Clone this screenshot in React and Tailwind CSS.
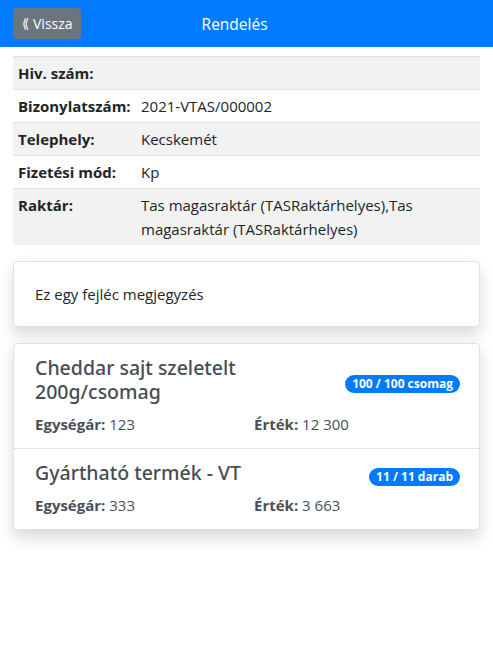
import React from "react";

const font = { fontFamily: '"Open Sans", "Noto Sans", sans-serif' };

function Row({ label, value, striped }) {
  return (
    <div className={`grid grid-cols-[123px_1fr] border-t border-[#dee2e6] ${striped ? "bg-[#f2f2f2]" : "bg-white"}`}>
      <div className="px-[5px] py-[4px] font-bold text-[#212529]">{label}</div>
      <div className="px-[5px] py-[4px] text-[#212529]">{value}</div>
    </div>
  );
}

function Item({ title, badge, price, value, last }) {
  return (
    <div className={`pl-[21px] pr-[19px] py-[12px] ${last ? "" : "border-b border-[#dee2e6]"}`}>
      <div className="flex items-center justify-between">
        <div style={{ fontFamily: '"Noto Sans", "Open Sans", sans-serif' }} className="mb-2 text-[19.5px] leading-[24px] font-medium text-[#474d53] w-[320px]">{title}</div>
        <span className="whitespace-nowrap rounded-full bg-[#007bff] px-[7px] text-[12px] leading-[18px] font-bold text-white">{badge}</span>
      </div>
      <div className="grid grid-cols-[219px_1fr] text-[#495057]">
        <div><span className="font-bold">Egységár:</span> {price}</div>
        <div><span className="font-bold">Érték:</span> {value}</div>
      </div>
    </div>
  );
}

export default function App() {
  return (
    <div style={font} className="w-[493px] min-h-[645px] bg-white text-[15px] leading-[24px]">
      <div className="h-[47px] bg-[#007bff] flex items-center px-[13px]">
        <button className="h-[31px] rounded-[4px] bg-[#6c757d] pl-[9px] pr-[8px] text-[14px] leading-[21px] text-white flex items-center">
          <span className="mr-[4px] text-[13px]">⟪</span>Vissza
        </button>
        <div className="ml-[121px] text-white text-[15.5px]">Rendelés</div>
      </div>
      <div className="px-[13px] pt-[9px]">
        <Row label="Hiv. szám:" value="" striped />
        <Row label="Bizonylatszám:" value="2021-VTAS/000002" />
        <Row label="Telephely:" value="Kecskemét" striped />
        <Row label="Fizetési mód:" value="Kp" />
        <Row label="Raktár:" value="Tas magasraktár (TASRaktárhelyes),Tas magasraktár (TASRaktárhelyes)" striped />
      </div>
      <div className="px-[13px] pt-[16px]">
        <div className="rounded-[4px] border border-[#dee2e6] bg-white shadow-[0_8px_16px_rgba(0,0,0,0.15)] px-[21px] py-[20px] text-[#212529]">
          Ez egy fejléc megjegyzés
        </div>
        <div className="mt-[16px] rounded-[4px] border border-[#dee2e6] bg-white shadow-[0_8px_16px_rgba(0,0,0,0.15)]">
          <Item title="Cheddar sajt szeletelt 200g/csomag" badge="100 / 100 csomag" price="123" value="12 300" />
          <Item title="Gyártható termék - VT" badge="11 / 11 darab" price="333" value="3 663" last />
        </div>
      </div>
    </div>
  );
}
